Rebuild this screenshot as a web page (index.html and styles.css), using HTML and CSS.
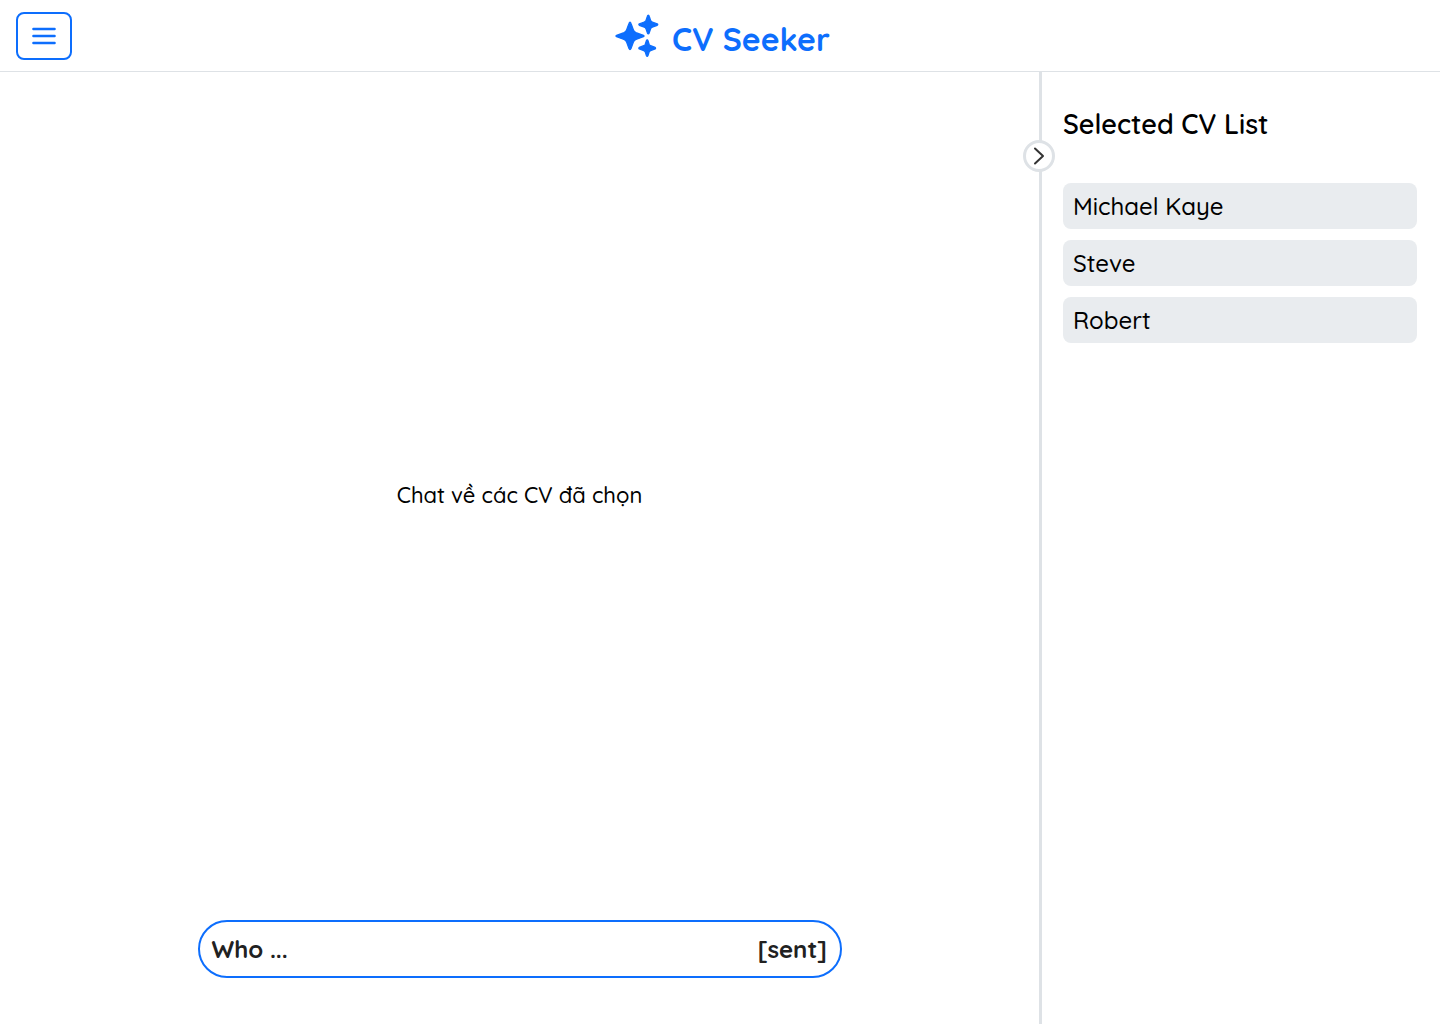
FILE: index.html
```html
<!DOCTYPE html>
<html lang="vi">
<head>
<meta charset="utf-8">
<title>CV Seeker</title>
<link rel="stylesheet" href="styles.css">
</head>
<body>
<header class="topbar">
  <button class="menu-button" aria-label="Menu">
    <svg width="24" height="18" viewBox="0 0 24 18"><path d="M1.400 2h21.200M1.400 9h21.200M1.400 16h21.200"/></svg>
  </button>
  <div class="brand">
    <svg class="brand-icon" width="44" height="44" viewBox="0 0 44 44">
      <path d="M15 8.200 Q15.600 8.200 16 9.500 L18.300 15.800 Q19 17.900 21 18.700 L28.400 21.300 Q29.600 22 28.400 22.700 L21 25.400 Q19 26.200 18.300 28.200 L16 34.600 Q15 36.800 14 34.600 L11.700 28.200 Q11 26.200 9 25.400 L1.600 22.700 Q.4 22 1.600 21.300 L9 18.700 Q11 17.900 11.700 15.800 L14 9.500 Q14.400 8.200 15 8.200Z"/>
      <path d="M33.300 1.100 Q33.900 1.100 34.200 2.200 L35.500 6.200 Q36 7.500 37.300 8 L42.200 9.900 Q43.300 10.600 42.200 11.300 L37.300 13.200 Q36 13.700 35.500 15 L34.200 18.900 Q33.300 21 32.400 18.900 L31.100 15 Q30.600 13.700 29.300 13.200 L24.400 11.300 Q23.300 10.600 24.400 9.900 L29.300 8 Q30.600 7.500 31.100 6.200 L32.400 2.200 Q32.700 1.100 33.300 1.100Z"/>
      <path d="M32.200 25.800 Q32.700 25.800 33 26.700 L34.100 30.200 Q34.500 31.300 35.600 31.700 L40.100 33.400 Q41 34.200 40.100 34.900 L35.600 36.600 Q34.500 37 34.100 38.100 L33 41.500 Q32.200 43.300 31.400 41.500 L30.300 38.100 Q29.900 37 28.800 36.600 L24.300 34.900 Q23.400 34.200 24.300 33.400 L28.800 31.700 Q29.900 31.300 30.300 30.200 L31.400 26.700 Q31.700 25.800 32.200 25.800Z"/>
    </svg>
    <span class="brand-name">CV Seeker</span>
  </div>
</header>
<div class="workspace">
  <main class="chat">
    <div class="chat-empty"><span class="chat-hint">Chat về các CV đã chọn</span></div>
    <div class="composer"><span>Who ...</span><span>[sent]</span></div>
  </main>
  <aside class="sidebar">
    <button class="collapse" aria-label="Collapse">
      <svg width="12" height="18" viewBox="0 0 12 18"><path d="M2 1.500 10 9 2 16.500"/></svg>
    </button>
    <h2 class="sidebar-title">Selected CV List</h2>
    <ul class="cv-list">
      <li class="cv">Michael Kaye</li>
      <li class="cv">Steve</li>
      <li class="cv">Robert</li>
    </ul>
  </aside>
</div>
</body>
</html>
```

FILE: styles.css
```css
* { box-sizing: border-box; }
body {
  margin: 0;
  height: 1024px;
  display: flex;
  flex-direction: column;
  overflow: hidden;
  background: #fff;
  color: #000;
  font-family: Quicksand, Lato, sans-serif;
}
button { padding: 0; background: #fff; }
svg { display: block; }
.topbar {
  height: 72px;
  flex: none;
  display: grid;
  grid-template-columns: 1fr auto 1fr;
  align-items: center;
  padding: 0 16px;
  border-bottom: 1px solid #dee2e6;
}
.menu-button {
  width: 56px;
  height: 48px;
  display: grid;
  place-items: center;
  border: 2px solid #0d6efd;
  border-radius: 8px;
}
.menu-button path { stroke: #0d6efd; stroke-width: 2.4; stroke-linecap: round; }
.brand {
  display: flex;
  align-items: center;
  gap: 13px;
  width: 210px;
  color: #0d6efd;
}
.brand-icon { flex: none; overflow: visible; fill: currentColor; stroke: currentColor; stroke-width: 1.3; stroke-linejoin: round; }
.brand-name { padding-top: 6px; font-size: 32px; line-height: 40px; font-weight: 700; white-space: nowrap; }
.workspace { flex: 1; display: flex; min-height: 0; }
.chat {
  width: 1039px;
  display: flex;
  flex-direction: column;
  align-items: center;
  padding-bottom: 46px;
}
.chat-empty { flex: 1; display: flex; align-items: center; padding-bottom: 2px; }
.chat-hint { font-size: 22px; line-height: 28px; font-weight: 500; }
.composer {
  width: 644px;
  height: 58px;
  display: flex;
  align-items: center;
  justify-content: space-between;
  padding: 0 12.5px 0 12px;
  border: 2px solid #0d6efd;
  border-radius: 29px;
  color: #212121;
  font-size: 24px;
  line-height: 30px;
  font-weight: 700;
}
.sidebar {
  position: relative;
  flex: 1;
  padding: 35px 23px 0 21px;
  border-left: 3px solid #dee2e6;
}
.collapse {
  position: absolute;
  left: -19px;
  top: 68px;
  width: 32px;
  height: 32px;
  display: grid;
  place-items: center;
  border: 3px solid #dee2e6;
  border-radius: 50%;
}
.collapse path { fill: none; stroke: #333; stroke-width: 2; stroke-linecap: round; stroke-linejoin: round; }
.sidebar-title { margin: 0 0 41px; font-size: 27px; line-height: 35px; font-weight: 600; }
.cv-list { margin: 0; padding: 0; list-style: none; display: flex; flex-direction: column; gap: 11px; }
.cv { height: 46px; padding: 8px 10px; border-radius: 8px; background: #e9ecef; font-size: 24px; line-height: 30px; font-weight: 500; }
```
